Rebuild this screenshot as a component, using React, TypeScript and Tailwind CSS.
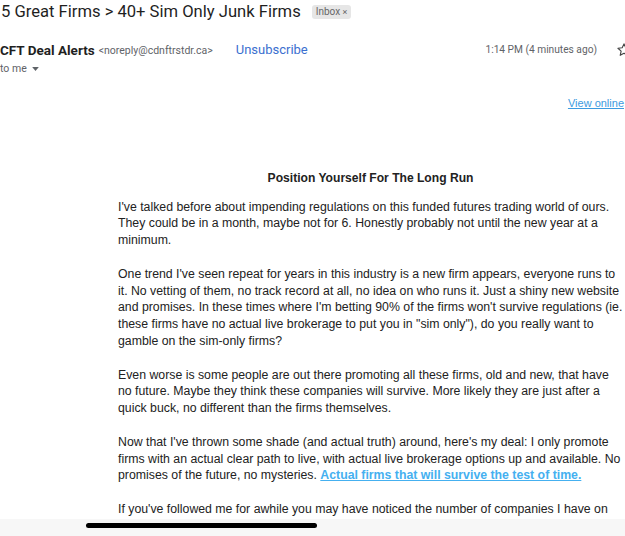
import React from "react";

function Star() {
	return (
		<svg viewBox="0 0 24 24" className="h-[16px] w-[16px]" fill="none" stroke="#444" strokeWidth="1.7" strokeLinejoin="round">
			<path d="M12 2.8l2.7 5.9 6.4.7-4.8 4.3 1.4 6.3L12 16.8l-5.7 3.2 1.4-6.3-4.8-4.3 6.4-.7z" />
		</svg>
	);
}

export default function App() {
	const body = "font-['Liberation_Sans',Arial,sans-serif] text-[12.3px] leading-[16.8px] text-[#222]";
	return (
		<div className="relative h-[536px] w-[625px] overflow-hidden bg-white">
			{/* subject */}
			<div className="flex h-[24px] items-center gap-[11px] pl-[1px] font-['Roboto',sans-serif]">
				<h1 className="whitespace-nowrap text-[16.6px] leading-[24px] text-[#1f1f1f]">5 Great Firms &gt; 40+ Sim Only Junk Firms</h1>
				<span className="rounded-[3px] bg-[#e6e6e6] px-[4px] text-[10px] leading-[14px] text-[#666]">
					Inbox <span className="text-[9px]">×</span>
				</span>
			</div>

			{/* sender */}
			<div className="mt-[16px] flex h-[20px] items-center whitespace-nowrap font-['Roboto',sans-serif]">
				<span className="text-[13.5px] font-bold text-[#1f1f1f]">CFT Deal Alerts</span>
				<span className="ml-[4px] mt-[1px] text-[10.5px] text-[#5f6368]">&lt;noreply@cdnftrstdr.ca&gt;</span>
				<span className="ml-[23px] text-[13px] text-[#3b6fcf]">Unsubscribe</span>
				<span className="ml-auto text-[10.2px] text-[#5f6368]">1:14 PM (4 minutes ago)</span>
				<span className="ml-[19px] w-[9px] overflow-visible">
					<Star />
				</span>
			</div>
			<div className="mt-px flex h-[16px] items-center gap-[5px] font-['Roboto',sans-serif] text-[10.5px] text-[#5f6368]">
				to me
				<svg viewBox="0 0 10 6" className="h-[4px] w-[7px]" fill="#5f6368">
					<path d="M0 0h10L5 6z" />
				</svg>
			</div>

			{/* view online */}
			<div className="mt-[19px] h-[14px] pr-[1px] text-right font-['Liberation_Sans',Arial,sans-serif] text-[11px] leading-[14px] text-[#3d9be0] underline">
				View online
			</div>

			{/* body */}
			<div className={`ml-[118px] mt-[59.6px] w-[505px] ${body}`}>
				<p className="mb-[12.2px] text-center text-[12.1px] font-bold">Position Yourself For The Long Run</p>
				<p className="mb-[16.8px]">
					I've talked before about impending regulations on this funded futures trading world of ours. They could be in a month, maybe not for 6. Honestly probably not until the new year at a minimum.
				</p>
				<p className="mb-[16.8px]">
					One trend I've seen repeat for years in this industry is a new firm appears, everyone runs to it. No vetting of them, no track record at all, no idea on who runs it. Just a shiny new website and promises. In these times where I'm betting 90% of the firms won't survive regulations (ie. these firms have no actual live brokerage to put you in "sim only"), do you really want to gamble on the sim-only firms?
				</p>
				<p className="mb-[16.8px]">
					Even worse is some people are out there promoting all these firms, old and new, that have no future. Maybe they think these companies will survive. More likely they are just after a quick buck, no different than the firms themselves.
				</p>
				<p className="mb-[16.8px]">
					Now that I've thrown some shade (and actual truth) around, here's my deal: I only promote firms with an actual clear path to live, with actual live brokerage options up and available. No promises of the future, no mysteries.{" "}
					<a className="font-bold text-[#45b0f0] underline">Actual firms that will survive the test of time.</a>
				</p>
				<p>
					If you've followed me for awhile you may have noticed the number of companies I have on my site drastically reduced this last month. I'm taking it serious, my word is my bond.
				</p>
			</div>

			{/* bottom bar overlay */}
			<div className="absolute bottom-0 left-0 h-[17px] w-full bg-[#f7f7f7]">
				<div className="ml-[86px] mt-[4px] h-[5px] w-[231px] rounded-full bg-black" />
			</div>
		</div>
	);
}
